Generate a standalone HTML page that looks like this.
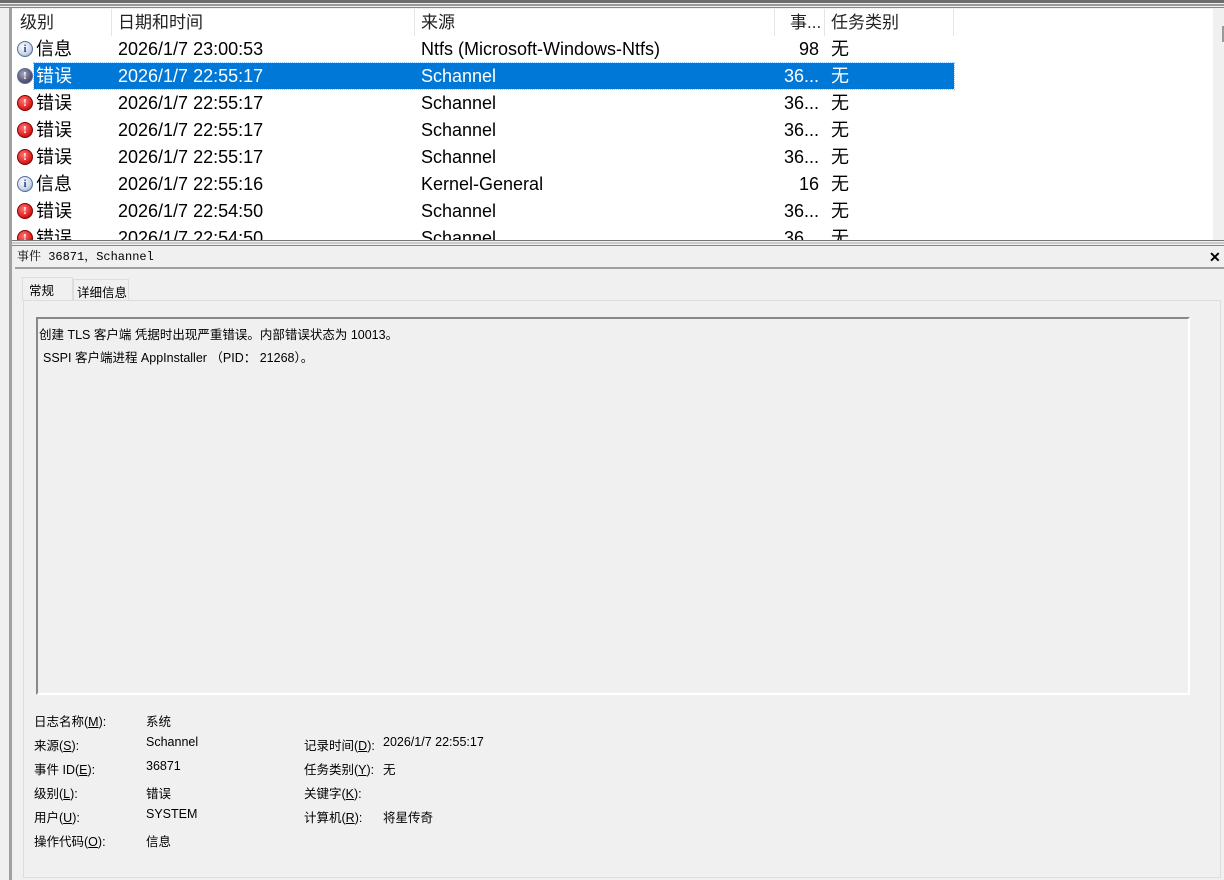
<!DOCTYPE html>
<html><head><meta charset="utf-8"><style>
*{margin:0;padding:0;box-sizing:border-box}
body{width:1224px;height:880px;background:#f0f0f0;position:relative;overflow:hidden;font-family:"Liberation Sans","Noto Sans CJK SC",sans-serif;color:#000}
.a{position:absolute;white-space:nowrap}
.list{position:absolute;left:12px;top:9px;width:1212px;height:231px;background:#fff;overflow:hidden}
.hdr{position:absolute;top:0;height:27px;font-size:17px;line-height:27px;color:#222}
.sep{position:absolute;top:0;width:1px;height:27px;background:#e5e5e5}
.row{position:absolute;left:0;height:27px;width:942px;font-size:18px;line-height:27px}
.row span{position:absolute;top:0}
.r{text-align:right;width:60px;left:747px}
.sel{background:#0078d7;color:#fff;outline:1px dotted #9cf}
.ic{position:absolute;left:5px;top:5px;width:16px;height:16px;border-radius:50%;color:#fff;font:bold 11px/15px "Liberation Serif",serif;text-align:center}
.info{background:radial-gradient(circle at 40% 35%,#fff,#c8d4e8 60%,#6a7fa8);border:1px solid #55709c;color:#2b4c91}
.err{background:radial-gradient(circle at 40% 35%,#f77,#d22 60%,#900);border:1px solid #800}
.sm{font-size:12.5px}
u{text-decoration:underline}
</style></head><body>
<div class="a" style="left:0;top:0;width:1224px;height:3px;background:#6d6d6d"></div>
<div class="a" style="left:0;top:4px;width:1224px;height:2px;background:#999"></div>
<div class="a" style="left:0;top:7px;width:1224px;height:1px;background:#888"></div>
<div class="a" style="left:9px;top:8px;width:3px;height:872px;background:#a0a0a0"></div>
<div class="list">
 <div class="hdr" style="left:8px">级别</div><div class="sep" style="left:99px"></div>
 <div class="hdr" style="left:106px">日期和时间</div><div class="sep" style="left:402px"></div>
 <div class="hdr" style="left:409px">来源</div><div class="sep" style="left:762px"></div>
 <div class="hdr" style="left:778px">事...</div><div class="sep" style="left:812px"></div>
 <div class="hdr" style="left:819px">任务类别</div><div class="sep" style="left:941px"></div>
 <div class="a" style="left:1201px;top:0;width:11px;height:231px;background:#f0f0f0"></div>
 <div class="a" style="left:1210px;top:17px;width:2px;height:16px;background:#999"></div>
</div>
<div class="a" style="left:12px;top:36px;width:960px;height:204px;overflow:hidden">
 <div class="row" style="top:0"><div class="ic info">i</div><span style="left:24px">信息</span><span style="left:106px">2026/1/7 23:00:53</span><span style="left:409px">Ntfs (Microsoft-Windows-Ntfs)</span><span class="r">98</span><span style="left:819px">无</span></div>
 <div class="row" style="top:27px;left:0"><div class="ic info" style="background:radial-gradient(circle at 40% 35%,#aab,#557 60%,#334);color:#fff">!</div><div class="a sel" style="left:22px;top:0;width:920px;height:26px"></div><span style="left:24px;color:#fff">错误</span><span style="left:106px;color:#fff">2026/1/7 22:55:17</span><span style="left:409px;color:#fff">Schannel</span><span class="r" style="color:#fff">36...</span><span style="left:819px;color:#fff">无</span></div>
 <div class="row" style="top:54px"><div class="ic err">!</div><span style="left:24px">错误</span><span style="left:106px">2026/1/7 22:55:17</span><span style="left:409px">Schannel</span><span class="r">36...</span><span style="left:819px">无</span></div>
 <div class="row" style="top:81px"><div class="ic err">!</div><span style="left:24px">错误</span><span style="left:106px">2026/1/7 22:55:17</span><span style="left:409px">Schannel</span><span class="r">36...</span><span style="left:819px">无</span></div>
 <div class="row" style="top:108px"><div class="ic err">!</div><span style="left:24px">错误</span><span style="left:106px">2026/1/7 22:55:17</span><span style="left:409px">Schannel</span><span class="r">36...</span><span style="left:819px">无</span></div>
 <div class="row" style="top:135px"><div class="ic info">i</div><span style="left:24px">信息</span><span style="left:106px">2026/1/7 22:55:16</span><span style="left:409px">Kernel-General</span><span class="r">16</span><span style="left:819px">无</span></div>
 <div class="row" style="top:162px"><div class="ic err">!</div><span style="left:24px">错误</span><span style="left:106px">2026/1/7 22:54:50</span><span style="left:409px">Schannel</span><span class="r">36...</span><span style="left:819px">无</span></div>
 <div class="row" style="top:189px"><div class="ic err">!</div><span style="left:24px">错误</span><span style="left:106px">2026/1/7 22:54:50</span><span style="left:409px">Schannel</span><span class="r">36...</span><span style="left:819px">无</span></div>
</div>
<div class="a" style="left:12px;top:240px;width:1212px;height:1px;background:#777"></div>
<div class="a" style="left:12px;top:242px;width:1212px;height:2px;background:#ccc"></div>
<div class="a" style="left:12px;top:245px;width:1212px;height:1px;background:#888"></div>
<div class="a" style="left:17px;top:249px;font-size:12px;line-height:16px;font-family:'Liberation Mono','Noto Serif CJK SC',monospace">事件 36871，Schannel</div>
<div class="a" style="left:1209px;top:248px;font:bold 14px/18px 'Liberation Sans',sans-serif">✕</div>
<div class="a" style="left:15px;top:267px;width:1209px;height:2px;background:#a0a0a0"></div>
<div class="a" style="left:22px;top:277px;width:51px;height:24px;background:#f0f0f0;border:1px solid #ddd;border-bottom:none"></div>
<div class="a sm" style="left:29px;top:280px">常规</div>
<div class="a" style="left:73px;top:279px;width:56px;height:21px;border:1px solid #ddd;border-bottom:none"></div>
<div class="a sm" style="left:77px;top:282px">详细信息</div>
<div class="a" style="left:23px;top:300px;width:1198px;height:578px;border:1px solid #ddd"></div>
<div class="a" style="left:36px;top:317px;width:1154px;height:378px;border-top:2px solid #888;border-left:2px solid #888;border-right:2px solid #fff;border-bottom:2px solid #fff"></div>
<div class="a sm" style="left:39px;top:324px">创建 TLS 客户端 凭据时出现严重错误。内部错误状态为 10013。</div>
<div class="a sm" style="left:43px;top:347px">SSPI 客户端进程 AppInstaller （PID： 21268）。</div>
<div class="a sm" style="left:34px;top:711px">日志名称(<u>M</u>):</div><div class="a sm" style="left:146px;top:711px">系统</div>
<div class="a sm" style="left:34px;top:735px">来源(<u>S</u>):</div><div class="a sm" style="left:146px;top:735px">Schannel</div>
<div class="a sm" style="left:304px;top:735px">记录时间(<u>D</u>):</div><div class="a sm" style="left:383px;top:735px">2026/1/7 22:55:17</div>
<div class="a sm" style="left:34px;top:759px">事件 ID(<u>E</u>):</div><div class="a sm" style="left:146px;top:759px">36871</div>
<div class="a sm" style="left:304px;top:759px">任务类别(<u>Y</u>):</div><div class="a sm" style="left:383px;top:759px">无</div>
<div class="a sm" style="left:34px;top:783px">级别(<u>L</u>):</div><div class="a sm" style="left:146px;top:783px">错误</div>
<div class="a sm" style="left:304px;top:783px">关键字(<u>K</u>):</div>
<div class="a sm" style="left:34px;top:807px">用户(<u>U</u>):</div><div class="a sm" style="left:146px;top:807px">SYSTEM</div>
<div class="a sm" style="left:304px;top:807px">计算机(<u>R</u>):</div><div class="a sm" style="left:383px;top:807px">将星传奇</div>
<div class="a sm" style="left:34px;top:831px">操作代码(<u>O</u>):</div><div class="a sm" style="left:146px;top:831px">信息</div>
</body></html>
